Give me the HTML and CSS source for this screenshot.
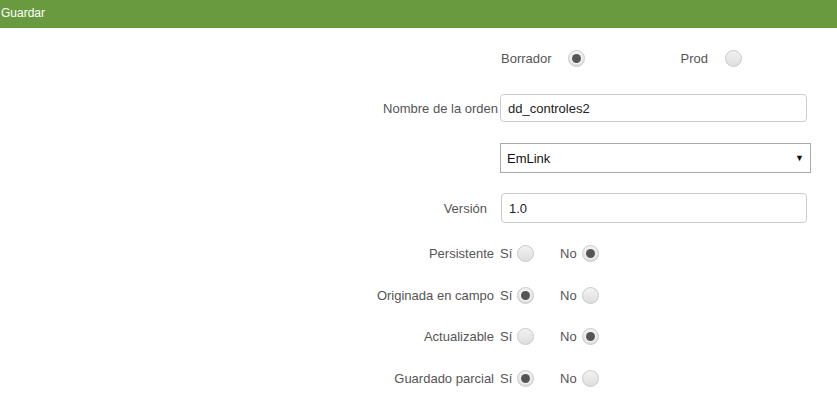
FILE: index.html
```html
<!DOCTYPE html>
<html lang="es">
<head>
<meta charset="utf-8">
<title>Guardar</title>
<link rel="stylesheet" href="styles.css">
</head>
<body>
<div class="header">Guardar</div>
<form class="form">
  <div class="row row-env">
    <label class="env"><span>Borrador</span><input type="radio" name="env" checked></label>
    <label class="env env-prod"><span>Prod</span><input type="radio" name="env"></label>
  </div>
  <div class="row row-field row-name">
    <span class="label">Nombre de la orden</span>
    <input class="text" type="text" value="dd_controles2">
  </div>
  <div class="row row-field row-select">
    <span class="label"></span>
    <div class="select"><span>EmLink</span><span class="arrow">▼</span></div>
  </div>
  <div class="row row-field row-version">
    <span class="label label-version">Versión</span>
    <input class="text text-version" type="text" value="1.0">
  </div>
  <div class="row row-radio row-first">
    <span class="label label-radio">Persistente</span>
    <label class="opt">Sí <input type="radio" name="p"></label>
    <label class="opt opt-no">No <input type="radio" name="p" checked></label>
  </div>
  <div class="row row-radio">
    <span class="label label-radio">Originada en campo</span>
    <label class="opt">Sí <input type="radio" name="o" checked></label>
    <label class="opt opt-no">No <input type="radio" name="o"></label>
  </div>
  <div class="row row-radio row-tight">
    <span class="label label-radio">Actualizable</span>
    <label class="opt">Sí <input type="radio" name="a"></label>
    <label class="opt opt-no">No <input type="radio" name="a" checked></label>
  </div>
  <div class="row row-radio">
    <span class="label label-radio">Guardado parcial</span>
    <label class="opt">Sí <input type="radio" name="g" checked></label>
    <label class="opt opt-no">No <input type="radio" name="g"></label>
  </div>
</form>
</body>
</html>
```
FILE: styles.css
```css
html, body {
  margin: 0;
  padding: 0;
  background: #fff;
  font-family: "Liberation Sans", Arial, sans-serif;
}
.header {
  height: 28px;
  line-height: 27px;
  background: #6a9a3f;
  color: #fff;
  font-size: 12px;
  padding-left: 1px;
}
.form {
  display: flex;
  flex-direction: column;
  padding-top: 17px;
}
.row {
  display: flex;
  align-items: center;
  font-size: 13px;
  color: #555;
}
.row-env {
  height: 26px;
  padding-left: 501px;
}
.env {
  display: flex;
  align-items: center;
  gap: 16px;
}
.env-prod {
  margin-left: 96px;
  gap: 17px;
}
.row-name {
  margin-top: 23px;
}
.row-select {
  margin-top: 21px;
}
.row-version {
  margin-top: 20px;
}
.label {
  width: 498px;
  text-align: right;
  flex: none;
}
.label-version {
  width: 487px;
  padding-right: 14px;
}
.text {
  box-sizing: border-box;
  width: 307px;
  height: 28px;
  margin: 0 0 0 2px;
  border: 1px solid #ccc;
  border-radius: 4px;
  padding: 0 7px;
  font: 13px "Liberation Sans", Arial, sans-serif;
  color: #222;
  outline: none;
}
.text-version {
  margin-left: 0;
  width: 306px;
  height: 30px;
}
.select {
  box-sizing: border-box;
  margin-left: 2px;
  width: 311px;
  height: 30px;
  border: 1px solid #a9a9a9;
  display: flex;
  align-items: center;
  justify-content: space-between;
  padding: 0 6px 0 6px;
  color: #111;
}
.arrow {
  font-size: 9px;
  color: #111;
}
.row-radio {
  height: 20px;
  margin-top: 22px;
}
.row-first {
  margin-top: 20px;
}
.row-tight {
  margin-top: 21px;
}
.label-radio {
  width: 494px;
  padding-right: 6px;
}
.opt {
  display: flex;
  align-items: center;
  gap: 5px;
  width: 60px;
}
.opt-no {
  width: auto;
}
input[type="radio"] {
  -webkit-appearance: none;
  appearance: none;
  margin: 0;
  width: 17px;
  height: 17px;
  border-radius: 50%;
  border: 1px solid #c9c9c9;
  background: linear-gradient(#f2f2f2, #dedede);
  box-sizing: border-box;
  position: relative;
  flex: none;
}
input[type="radio"]:checked::after {
  content: "";
  position: absolute;
  left: 3px;
  top: 3px;
  width: 9px;
  height: 9px;
  border-radius: 50%;
  background: #555;
  box-shadow: 0 0 0 1px #f4f4f4;
}
```
